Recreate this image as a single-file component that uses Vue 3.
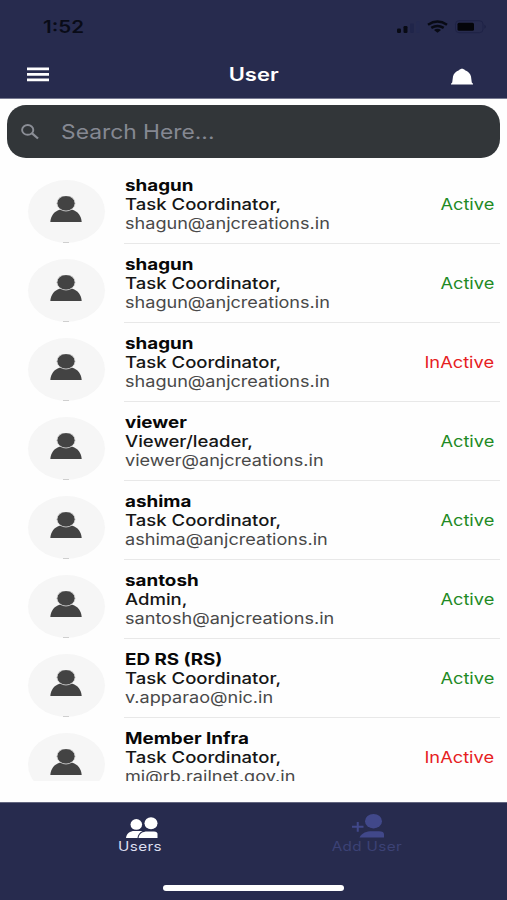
<script setup>
const coordinator = 'Task Coordinator,'
const users = [
  { name: 'shagun', role: coordinator, email: 'shagun@anjcreations.in', active: true },
  { name: 'shagun', role: coordinator, email: 'shagun@anjcreations.in', active: true },
  { name: 'shagun', role: coordinator, email: 'shagun@anjcreations.in', active: false },
  { name: 'viewer', role: 'Viewer/leader,', email: 'viewer@anjcreations.in', active: true },
  { name: 'ashima', role: coordinator, email: 'ashima@anjcreations.in', active: true },
  { name: 'santosh', role: 'Admin,', email: 'santosh@anjcreations.in', active: true },
  { name: 'ED RS (RS)', role: coordinator, email: 'v.apparao@nic.in', active: true },
  { name: 'Member Infra', role: coordinator, email: 'mi@rb.railnet.gov.in', active: false },
]
</script>

<template>
  <div class="screen">
    <header class="header">
      <div class="status-bar">
        <span class="clock">1:52</span>
        <svg class="signals" width="92" height="16" viewBox="0 0 92 16">
          <rect x="1" y="8.5" width="4" height="4.5" rx="1.2" fill="#080a14" />
          <rect x="7.5" y="6" width="4" height="7" rx="1.2" fill="#080a14" />
          <rect x="14" y="3.5" width="4" height="9.5" rx="1.2" fill="#20254a" />
          <rect x="20" y="1" width="3.5" height="12" rx="1.2" fill="#252a50" />
          <g fill="none" stroke="#080a14" stroke-width="2.5">
            <path d="M32 4.700Q41.500-1.500 51 4.700" />
            <path d="M35.300 7.900Q41.500 3.900 47.700 7.900" />
          </g>
          <path d="M38 9.900Q41.500 7.600 45 9.900L41.500 12.800Z" fill="#080a14" />
          <rect x="59.5" y=".7" width="27.5" height="12" rx="3.5" fill="none" stroke="#1e2246" />
          <rect x="61.5" y="2.7" width="16.5" height="8" rx="1.5" fill="#04050a" />
          <path d="M88.500 4.700q2.500 2 0 4z" fill="#1b1f40" />
        </svg>
      </div>
      <div class="toolbar">
        <svg class="menu" width="22" height="15" viewBox="0 0 22 15">
          <path d="M0 1.800h22M0 7.300h22M0 12.800h22" stroke="#fff" stroke-width="2.700" />
        </svg>
        <h1 class="title">User</h1>
        <svg class="bell" width="22" height="17" viewBox="0 0 22 17">
          <path d="M0 16.500v-.8L1.200 14.500L2 8.500C2.500 5.500 5 3.500 8 2.200C9.500 .2 12.500 .2 14 2.200C17 3.500 19.500 5.500 20 8.500L20.800 14.500L22 15.700v.8Z" fill="#fff" />
        </svg>
      </div>
    </header>

    <div class="search">
      <svg width="19" height="16" viewBox="0 0 19 16" fill="none" stroke="#8b8e96">
        <ellipse cx="6.7" cy="5.9" rx="5.6" ry="4.900" stroke-width="1.9" />
        <path d="M10.800 9.200L17 14.500" stroke-width="2.300" />
      </svg>
      <span class="placeholder">Search Here...</span>
    </div>

    <main class="list">
      <div v-for="(user, i) in users" :key="i" class="row">
        <div class="avatar">
          <svg width="32" height="27" viewBox="0 0 32 27" fill="#434343">
            <path d="M.3 26C.8 19.500 4.500 15.200 9.500 13.700H22.500C27.500 15.200 31.200 19.500 31.700 26Z" />
            <ellipse cx="16" cy="7.3" rx="9.1" ry="7.700" stroke="#dedede" stroke-width=".8" />
          </svg>
          <i class="nub"></i>
        </div>
        <div class="details">
          <div class="info">
            <span class="name">{{ user.name }}</span>
            <span class="role">{{ user.role }}</span>
            <span class="email">{{ user.email }}</span>
          </div>
          <span class="state" :class="{ inactive: !user.active }">{{ user.active ? 'Active' : 'InActive' }}</span>
        </div>
      </div>
    </main>

    <nav class="tabs">
      <div class="tab-row">
        <div class="tab tab-users">
          <svg width="32" height="22" viewBox="0 0 32 22" fill="#fff">
            <ellipse cx="10.3" cy="7.4" rx="5.8" ry="5.3" />
            <ellipse cx="25" cy="6.2" rx="6.5" ry="6" />
            <path d="M0 21C.5 16.500 4 14 8.500 14H16.500C13.500 15.600 11.800 18 11.500 21Z" />
            <path d="M12.500 21C13 16.500 17 14.500 21 14.500H28Q31.500 14.500 31.500 17V21Z" />
          </svg>
          <span class="label">Users</span>
        </div>
        <div class="tab tab-add">
          <svg width="32" height="24" viewBox="0 0 32 24" fill="#41488a">
            <path d="M0 12.800h11.500M5.750 8v9.800" stroke="#41488a" stroke-width="2" />
            <ellipse cx="21.5" cy="7.2" rx="8.5" ry="7.2" />
            <path d="M7.500 23.500C10 18.800 14.500 17.300 20 17.300H27Q32 17.300 32 20.500V23.500Z" />
          </svg>
          <span class="label">Add User</span>
        </div>
      </div>
      <div class="home-bar"></div>
    </nav>
  </div>
</template>

<style>
body { margin: 0; }
</style>

<style scoped>
.screen {
  display: flex;
  flex-direction: column;
  width: 507px;
  height: 900px;
  overflow: hidden;
  background: #fefefe;
  font-family: Inter, "Liberation Sans", sans-serif;
}
.header {
  box-sizing: border-box;
  flex: none;
  height: 99px;
  background: #272b4e;
  border-bottom: 1px solid #777a91;
}
.status-bar {
  display: flex;
  justify-content: space-between;
  align-items: flex-start;
  padding: 16px 19px 0 43px;
  height: 34px;
}
.clock {
  font-size: 17px;
  line-height: 22px;
  font-weight: 600;
  color: #090b17;
  transform: scaleX(1.21);
  transform-origin: left;
}
.signals { margin-top: 4px; }
.toolbar {
  display: grid;
  grid-template-columns: 22px 1fr 22px;
  align-items: center;
  padding: 0 34px 0 27px;
  height: 48px;
}
.title {
  margin: 0;
  padding: 2px 6px 0 0;
  padding-left: 12px;
  font-size: 18px;
  line-height: 24px;
  font-weight: 600;
  color: #fff;
  text-align: center;
  transform: scaleX(1.22);
}
.bell { margin-top: 5px; }
.search {
  display: flex;
  align-items: center;
  flex: none;
  gap: 21px;
  box-sizing: border-box;
  height: 53px;
  margin: 6px 7px 0;
  padding-left: 14px;
  border-radius: 19px;
  background: #323639;
}
.placeholder {
  font-size: 20px;
  line-height: 26px;
  color: #858892;
  transform: scaleX(1.14);
  transform-origin: left;
}
.list {
  flex: none;
  height: 616px;
  margin-top: 7px;
  overflow: hidden;
}
.row {
  display: flex;
  height: 79px;
  padding: 0 7px 0 28px;
}
.avatar {
  display: flex;
  flex-direction: column;
  align-items: center;
  justify-content: space-between;
  flex: none;
  box-sizing: border-box;
  width: 77px;
  height: 63px;
  margin-top: 15px;
  padding: 16px 1px 0 0;
  border-radius: 50%;
  background: #f6f6f6;
}
.nub {
  width: 6px;
  height: 1px;
  background: #cfcfcf;
}
.details {
  display: flex;
  flex: 1;
  justify-content: space-between;
  box-sizing: border-box;
  height: 79px;
  margin-left: 19px;
  padding: 11px 6px 0 1px;
  border-bottom: 1px solid #e8e8e8;
}
.info {
  display: flex;
  flex-direction: column;
  align-items: flex-start;
  font-size: 16px;
  line-height: 19px;
  white-space: nowrap;
}
.info span { transform-origin: left; }
.name {
  font-weight: 700;
  color: #080808;
  transform: scaleX(1.175);
}
.role {
  font-weight: 500;
  color: #161616;
  transform: scaleX(1.158);
}
.email {
  color: #494949;
  transform: scaleX(1.13);
}
.state {
  margin-top: 19px;
  font-size: 16px;
  line-height: 19px;
  color: #1f8a24;
  transform: scaleX(1.14);
  transform-origin: right;
}
.state.inactive { color: #e6201f; }
.tabs {
  display: flex;
  flex-direction: column;
  align-items: center;
  box-sizing: border-box;
  height: 98px;
  margin-top: auto;
  border-top: 1px solid #62657f;
  background: #272b4e;
}
.tab-row {
  display: grid;
  grid-template-columns: 1fr 1fr;
  width: 454px;
  height: 82px;
}
.tab {
  display: flex;
  flex-direction: column;
  align-items: center;
  box-sizing: border-box;
  padding-top: 14px;
  color: #dddff0;
}
.tab-users svg { margin: 0 0 0 3px; }
.tab-add { padding-top: 11px; color: #3c4276; }
.tab-add svg { margin: 0 0 1px 2px; }
.label {
  font-size: 12.5px;
  line-height: 16px;
  letter-spacing: .3px;
  transform: scaleX(1.22);
}
.home-bar {
  width: 181px;
  height: 6px;
  border-radius: 3px;
  background: #fff;
}
</style>
